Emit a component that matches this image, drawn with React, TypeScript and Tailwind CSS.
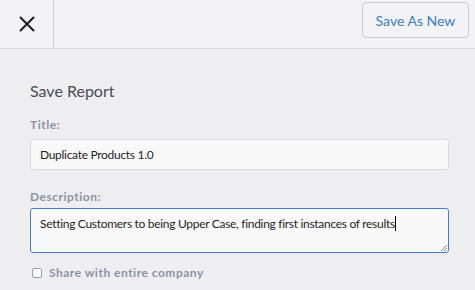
import React from 'react';

const App = () => {
  return (
    <div className="w-[475px] h-[290px] bg-[#eeeef0] overflow-hidden" style={{ fontFamily: 'Lato, "Open Sans", sans-serif' }}>
      <header className="h-[49px] flex items-stretch justify-between bg-[#f3f3f5] border-b border-[#dcdde2]">
        <div className="w-[54px] flex items-center justify-center border-r border-[#cfd0d5]">
          <svg width="18" height="18" viewBox="0 0 18 18" className="mt-[-1px]">
            <path d="M2 2 L16 16 M16 2 L2 16" stroke="#1b1b1b" strokeWidth="2" />
          </svg>
        </div>
        <div className="flex items-start pt-[2px] pr-[6px]">
          <button className="h-[36px] w-[107px] rounded-[4px] border border-[#c9cbd0] bg-[#f3f3f5] text-[14px] text-[#3a7fc6]">
            Save As New
          </button>
        </div>
      </header>
      <main className="pl-[30px] pr-[26px] pt-[32px]">
        <h1 className="text-[16px] leading-[20px] text-[#474c54]">Save Report</h1>
        <label className="block mt-[17px] text-[12px] leading-[14px] font-bold tracking-[0.5px] text-[#8a93a5]">Title:</label>
        <div className="mt-[7px] h-[31px] w-[419px] rounded-[3px] border border-[#d4d9e2] bg-[#f9f9f9] flex items-center pl-[9px] text-[12px] tracking-[-0.3px] text-[#1f1f1f]">
          Duplicate Products 1.0
        </div>
        <label className="block mt-[20px] text-[12px] leading-[14px] font-bold tracking-[0.5px] text-[#8a93a5]">Description:</label>
        <div className="relative mt-[4px] h-[45px] w-[419px] rounded-[3px] border border-[#3b7fd6] bg-[#f9f9f9] pl-[9px] pt-[7px] text-[12px] leading-[16px] tracking-[-0.3px] text-[#1f1f1f] whitespace-nowrap">
          Setting Customers to being Upper Case, finding first instances of results<span className="inline-block w-[1px] h-[15px] bg-black align-[-3px]" />
          <svg width="7" height="7" viewBox="0 0 7 7" className="absolute right-[1px] bottom-[1px]">
            <path d="M1 7 L7 1 M4 7 L7 4" stroke="#6b6b6b" strokeWidth="0.8" />
          </svg>
        </div>
        <label className="mt-[13px] flex items-center gap-[7px] pl-[2px]">
          <span className="w-[10px] h-[10px] rounded-[2px] border border-[#9aa0aa] bg-white" />
          <span className="text-[12px] leading-[14px] font-bold tracking-[0.5px] text-[#8a93a5]">Share with entire company</span>
        </label>
      </main>
    </div>
  );
};

export default App;
